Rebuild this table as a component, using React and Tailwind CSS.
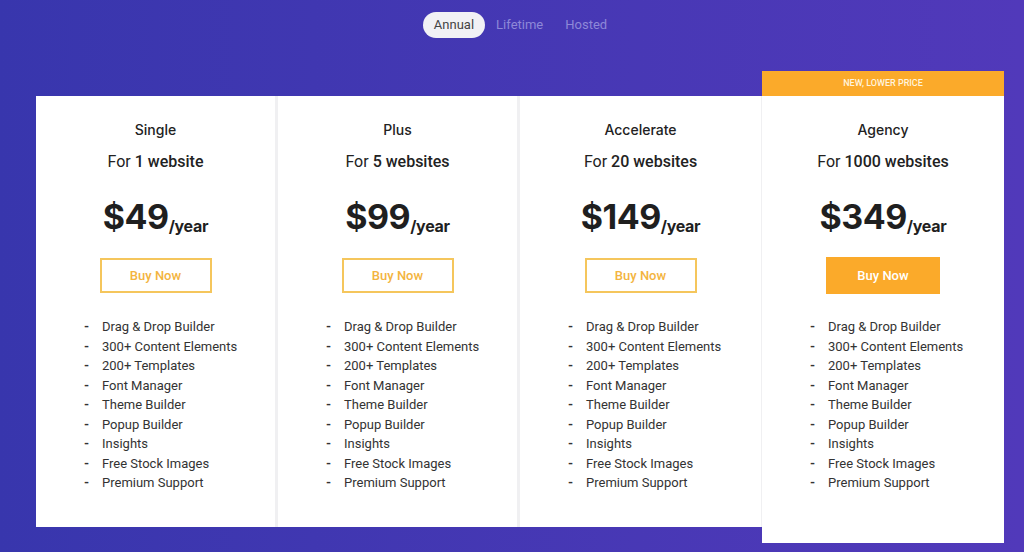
import React from 'react';

const features = [
  'Drag & Drop Builder',
  '300+ Content Elements',
  '200+ Templates',
  'Font Manager',
  'Theme Builder',
  'Popup Builder',
  'Insights',
  'Free Stock Images',
  'Premium Support',
];

const plans = [
  { name: 'Single', count: '1 website', price: '$49' },
  { name: 'Plus', count: '5 websites', price: '$99' },
  { name: 'Accelerate', count: '20 websites', price: '$149' },
  { name: 'Agency', count: '1000 websites', price: '$349', featured: true },
];

const PlanBody = ({ plan }) => (
  <div className="flex flex-col items-center pt-[24px]">
    <h3 className="font-['Inter',sans-serif] text-[14px] font-medium leading-[20px] text-[#222]">{plan.name}</h3>
    <p className="mt-[12px] font-['Roboto',sans-serif] text-[16px] leading-[20px] text-[#222]">
      For <span className="font-medium">{plan.count}</span>
    </p>
    <div className="mt-[25px] flex items-end font-['Inter',sans-serif] font-bold text-[#1f1f1f]">
      <span className="text-[34px] leading-[40px] tracking-[-0.5px]">{plan.price}</span>
      <span className="mb-[1px] text-[16px] leading-[20px] tracking-[-0.3px]">/year</span>
    </div>
    {plan.featured ? (
      <button className="mt-[20px] h-[37px] w-[114px] bg-[#fbaa2a] font-['Roboto',sans-serif] text-[13px] font-medium text-white">
        Buy Now
      </button>
    ) : (
      <button className="mt-[21px] h-[35px] w-[112px] border-2 border-[#f5c65c] font-['Roboto',sans-serif] text-[13px] font-medium text-[#f3b440]">
        Buy Now
      </button>
    )}
    <ul
      className={`${plan.featured ? 'mt-[23px]' : 'mt-[24px]'} w-full pl-[48px] font-['Roboto',sans-serif] text-[13px] leading-[19.5px] text-[#333]`}
    >
      {features.map((f) => (
        <li key={f} className="flex">
          <span className="w-[18px] font-bold">-</span>
          <span>{f}</span>
        </li>
      ))}
    </ul>
  </div>
);

export default function App() {
  return (
    <div className="h-[552px] w-full overflow-hidden bg-linear-to-r from-[#3836ad] to-[#5139ba]">
      <div className="flex justify-center pl-[17px] pt-[12px] font-['Roboto',sans-serif] text-[13px]">
        <span className="rounded-full bg-[#f1f1f5] px-[11px] leading-[26px] text-[#444]">Annual</span>
        <span className="px-[11px] leading-[26px] text-[#8e88d8]">Lifetime</span>
        <span className="px-[11px] leading-[26px] text-[#8e88d8]">Hosted</span>
      </div>
      <div className="mt-[33px] flex items-start pl-[36px]">
        {plans.map((plan, i) =>
          plan.featured ? (
            <div key={plan.name} className="w-[242px]">
              <div className="flex h-[25px] items-center justify-center bg-[#fbaa2a] font-['Roboto',sans-serif] text-[9px] font-medium uppercase text-[#fff4df]">
                New, Lower Price
              </div>
              <div className="h-[447px] bg-white">
                <PlanBody plan={plan} />
              </div>
            </div>
          ) : (
            <div
              key={plan.name}
              className={`mt-[25px] h-[431px] w-[242px] bg-white ${i < 2 ? 'border-r-[3px] border-[#f0f0f2]' : 'border-r border-[#f0f0f2]'}`}
            >
              <PlanBody plan={plan} />
            </div>
          )
        )}
      </div>
    </div>
  );
}
